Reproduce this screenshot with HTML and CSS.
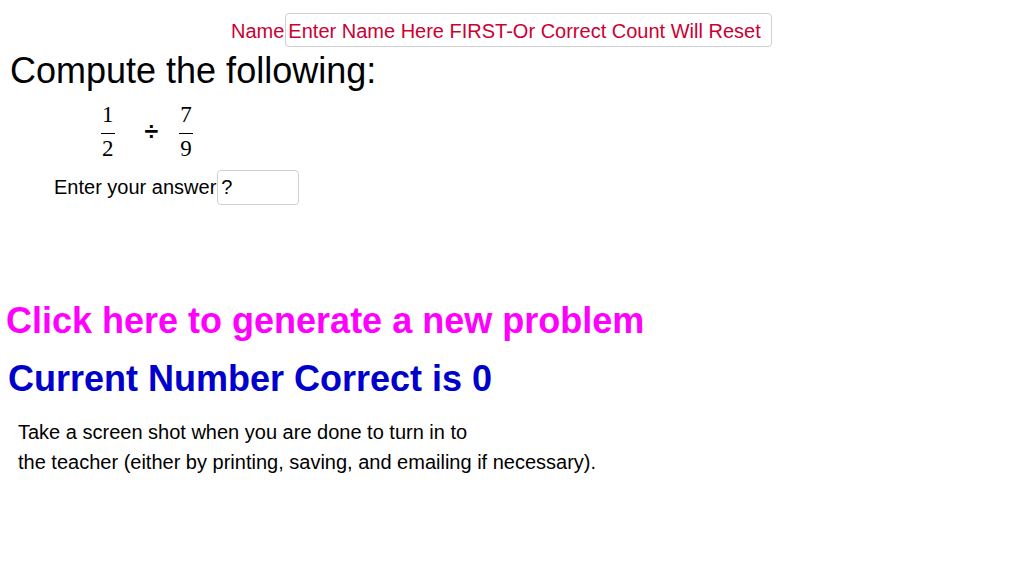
FILE: index.html
```html
<!DOCTYPE html>
<html>
<head>
<meta charset="utf-8">
<link rel="stylesheet" href="styles.css">
</head>
<body>
<div class="applet">
  <div class="name-row">
    <span class="name-label">Name</span>
    <div class="name-input">Enter Name Here FIRST-Or Correct Count Will Reset</div>
  </div>
  <h1 class="compute">Compute the following:</h1>
  <div class="problem">
    <span class="frac"><span class="num">1</span><span class="den">2</span></span>
    <span class="op">÷</span>
    <span class="frac"><span class="num">7</span><span class="den">9</span></span>
  </div>
  <div class="answer-row">
    <span class="answer-label">Enter your answer</span>
    <div class="answer-input">?</div>
  </div>
  <div class="generate">Click here to generate a new problem</div>
  <div class="count">Current Number Correct is 0</div>
  <p class="note">Take a screen shot when you are done to turn in to<br>the teacher (either by printing, saving, and emailing if necessary).</p>
</div>
</body>
</html>
```
FILE: styles.css
```css
html, body {
  margin: 0;
  padding: 0;
  background: #fff;
}
.applet {
  width: 1024px;
  height: 564px;
  overflow: hidden;
  font-family: "Liberation Sans", Arial, sans-serif;
  color: #000;
}
.name-row {
  display: flex;
  align-items: baseline;
  padding: 13px 0 0 231px;
  height: 34px;
}
.name-label {
  font-size: 20px;
  color: #cc0033;
  margin-right: 1px;
}
.name-input {
  box-sizing: border-box;
  width: 487px;
  height: 34px;
  border: 1px solid #d0d0d0;
  border-radius: 4px;
  padding: 1px 0 0 2px;
  font-size: 20px;
  line-height: 32px;
  color: #cc0033;
}
.compute {
  margin: 0;
  padding: 4px 0 0 10px;
  font-weight: normal;
  font-size: 36px;
  line-height: 40px;
}
.problem {
  display: flex;
  align-items: center;
  padding: 12px 0 0 101px;
  font-family: "Liberation Serif", "Times New Roman", serif;
  font-size: 23px;
}
.frac {
  display: inline-flex;
  flex-direction: column;
  align-items: center;
}
.frac .num {
  line-height: 23px;
  border-bottom: 1px solid #000;
  padding: 0 1px 7px;
}
.frac .den {
  line-height: 23px;
  padding-top: 3px;
}
.op {
  font-family: "Liberation Sans", Arial, sans-serif;
  font-weight: bold;
  font-size: 25px;
  margin: 0 21px 0 30px;
}
.answer-row {
  display: flex;
  align-items: baseline;
  padding: 10px 0 0 54px;
}
.answer-label {
  font-size: 20px;
  margin-right: 1px;
}
.answer-input {
  box-sizing: border-box;
  width: 82px;
  height: 35px;
  border: 1px solid #d0d0d0;
  border-radius: 4px;
  padding-left: 3px;
  font-size: 20px;
  line-height: 33px;
}
.generate {
  margin-top: 96px;
  padding-left: 6px;
  font-weight: bold;
  font-size: 36px;
  line-height: 40px;
  color: #ff00ff;
}
.count {
  margin-top: 18px;
  padding-left: 8px;
  font-weight: bold;
  font-size: 36px;
  line-height: 40px;
  color: #0000cc;
}
.note {
  margin: 18px 0 0 18px;
  font-size: 20px;
  line-height: 30px;
}
```
